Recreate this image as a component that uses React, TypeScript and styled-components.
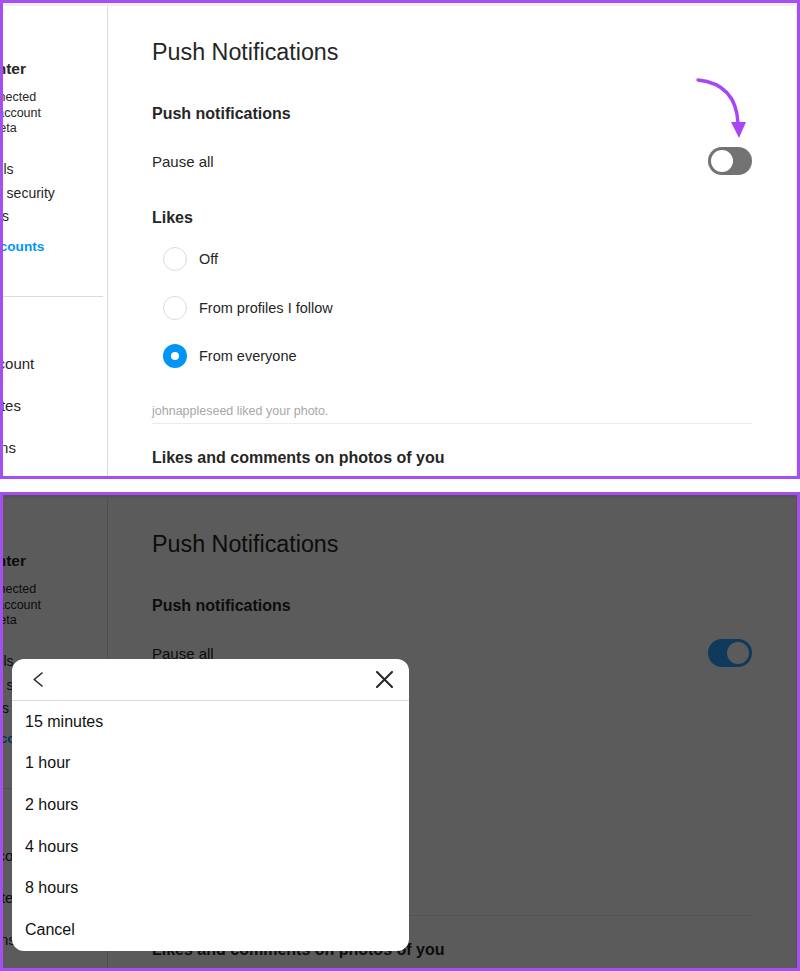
import styled, { createGlobalStyle } from 'styled-components';

const GlobalStyle = createGlobalStyle`
  body {
    margin: 0;
    background: #ffffff;
    font-family: 'Liberation Sans', Arial, sans-serif;
    color: #262626;
  }
`;

const Page = styled.div`
  display: flex;
  flex-direction: column;
  gap: 13px;
  width: 800px;
`;

const Frame = styled.div`
  position: relative;
  box-sizing: border-box;
  height: 479px;
  border: 3px solid #a64ff0;
  background: #ffffff;
  overflow: hidden;
  display: flex;
  flex-direction: column;
`;

const TopStrip = styled.div`
  height: 3px;
  background: #efefef;
  flex-shrink: 0;
`;

const Body = styled.div`
  display: flex;
  flex: 1;
  min-height: 0;
`;

/* sidebar is scrolled sideways, so only the right end of each line shows */
const Sidebar = styled.nav`
  box-sizing: border-box;
  width: 105px;
  flex-shrink: 0;
  border-right: 1px solid #dbdbdb;
  overflow: hidden;
`;

const SidebarInner = styled.div`
  width: 212px;
  margin-left: -108px;
  padding-top: 53px;
`;

const AccountsCard = styled.div`
  padding: 0 32px 0 7px;
`;

const CardTitle = styled.div`
  font-size: 15.5px;
  font-weight: 700;
  line-height: 20px;
`;

const CardText = styled.p`
  margin: 11px 0 0;
  font-size: 12.5px;
  line-height: 15.5px;
`;

const CardLinks = styled.ul`
  list-style: none;
  margin: 6px 0 0;
  padding: 0;
`;

const CardLink = styled.li`
  padding-left: 12px;
  font-size: 14px;
  line-height: 23.5px;
  white-space: nowrap;
`;

const SeeMore = styled.a`
  display: block;
  margin-top: 6px;
  color: #0095f6;
  font-size: 13.6px;
  font-weight: 700;
  line-height: 23px;
  text-decoration: none;
`;

const SidebarDivider = styled.hr`
  border: none;
  height: 1px;
  background: #dbdbdb;
  margin: 15px 4px 3px 0;
`;

const MenuItem = styled.a`
  display: flex;
  align-items: center;
  height: 42.4px;
  font-size: 15px;
  color: #262626;
  white-space: nowrap;
  text-decoration: none;
`;

const Main = styled.main`
  flex: 1;
  padding: 24px 44px 0 44px;
  border-right: 1px solid #ececec;
`;

const Title = styled.h1`
  margin: 0;
  font-size: 23.3px;
  font-weight: 400;
  line-height: 44px;
`;

const SectionTitle = styled.h2<{ $gap: number }>`
  margin: ${(p) => p.$gap}px 0 0;
  font-size: 16px;
  font-weight: 700;
  line-height: 32px;
`;

const SettingRow = styled.div`
  display: flex;
  align-items: center;
  justify-content: space-between;
  height: 48px;
  margin-top: 7px;
  font-size: 15px;
`;

const Toggle = styled.button<{ $on: boolean }>`
  box-sizing: border-box;
  width: 44px;
  height: 28px;
  padding: 3px;
  border: none;
  border-radius: 14px;
  background: ${(p) => (p.$on ? '#2aa4ff' : '#737373')};
  display: flex;
  justify-content: ${(p) => (p.$on ? 'flex-end' : 'flex-start')};
  align-items: center;
  cursor: pointer;
`;

const Knob = styled.span`
  width: 22px;
  height: 22px;
  border-radius: 50%;
  background: #ffffff;
`;

const RadioGroup = styled.div`
  margin-top: 1px;
`;

const RadioRow = styled.label`
  display: flex;
  align-items: center;
  gap: 12px;
  height: 48.5px;
  padding-left: 11px;
  font-size: 14.5px;
`;

const RadioCircle = styled.span<{ $checked: boolean }>`
  box-sizing: border-box;
  width: 24px;
  height: 24px;
  border-radius: 50%;
  border: ${(p) => (p.$checked ? 'none' : '1px solid #dbdbdb')};
  background: ${(p) => (p.$checked ? '#0095f6' : '#ffffff')};
  display: flex;
  align-items: center;
  justify-content: center;

  &::after {
    content: '';
    display: ${(p) => (p.$checked ? 'block' : 'none')};
    width: 8px;
    height: 8px;
    border-radius: 50%;
    background: #ffffff;
  }
`;

const Caption = styled.div`
  margin-top: 22.5px;
  padding-bottom: 4px;
  border-bottom: 1px solid #ebebeb;
  font-size: 12.5px;
  line-height: 16px;
  color: #a8a8a8;
`;

const Pointer = styled.svg`
  position: absolute;
  left: 692px;
  top: 74px;
`;

const Dimmer = styled.div`
  position: absolute;
  inset: 0;
  background: rgba(0, 0, 0, 0.643);
`;

const Sheet = styled.div`
  position: absolute;
  left: 9px;
  top: 164px;
  width: 397px;
  background: #ffffff;
  border-radius: 12px;
  overflow: hidden;
`;

const SheetHeader = styled.div`
  box-sizing: border-box;
  height: 42px;
  padding: 0 16px 0 21px;
  border-bottom: 1px solid #dbdbdb;
  display: flex;
  align-items: center;
  justify-content: space-between;
`;

const IconButton = styled.button`
  border: none;
  background: none;
  padding: 0;
  display: flex;
  cursor: pointer;
`;

const SheetOption = styled.button`
  display: flex;
  align-items: center;
  width: 100%;
  height: 41.6px;
  padding: 0 0 0 13px;
  border: none;
  background: none;
  font-family: inherit;
  font-size: 16px;
  color: #111111;
  text-align: left;
  cursor: pointer;
`;

const likeOptions = [
  { label: 'Off', checked: false },
  { label: 'From profiles I follow', checked: false },
  { label: 'From everyone', checked: true },
];

const menu = ['Edit profile', 'Professional account', 'Apps and websites', 'Email notifications', 'Push notifications'];

const pauseOptions = ['15 minutes', '1 hour', '2 hours', '4 hours', '8 hours', 'Cancel'];

const SettingsView = ({ paused }: { paused: boolean }) => (
  <>
    <TopStrip />
    <Body>
      <Sidebar>
        <SidebarInner>
          <AccountsCard>
            <CardTitle>Accounts Center</CardTitle>
            <CardText>
              Manage your connected experiences and account settings across Meta technologies.
            </CardText>
            <CardLinks>
              <CardLink>Personal details</CardLink>
              <CardLink>Password and security</CardLink>
              <CardLink>Ad preferences</CardLink>
            </CardLinks>
            <SeeMore href="#">See more in Accounts Center</SeeMore>
          </AccountsCard>
          <SidebarDivider />
          {menu.map((item) => (
            <MenuItem key={item} href="#">
              {item}
            </MenuItem>
          ))}
        </SidebarInner>
      </Sidebar>
      <Main>
        <Title>Push Notifications</Title>
        <SectionTitle $gap={24}>Push notifications</SectionTitle>
        <SettingRow>
          Pause all
          <Toggle $on={paused}>
            <Knob />
          </Toggle>
        </SettingRow>
        <SectionTitle $gap={17}>Likes</SectionTitle>
        <RadioGroup>
          {likeOptions.map((o) => (
            <RadioRow key={o.label}>
              <RadioCircle $checked={o.checked} />
              {o.label}
            </RadioRow>
          ))}
        </RadioGroup>
        <Caption>johnappleseed liked your photo.</Caption>
        <SectionTitle $gap={18}>Likes and comments on photos of you</SectionTitle>
      </Main>
    </Body>
  </>
);

const App = () => (
  <>
    <GlobalStyle />
    <Page>
      <Frame>
        <SettingsView paused={false} />
        <Pointer width="60" height="66" viewBox="0 0 60 66">
          <path d="M3 3 Q41 7 43 46" fill="none" stroke="#a845f5" strokeWidth="3.4" strokeLinecap="round" />
          <polygon points="36,45 51,45 44,61" fill="#a845f5" />
        </Pointer>
      </Frame>
      <Frame>
        <SettingsView paused />
        <Dimmer />
        <Sheet>
          <SheetHeader>
            <IconButton aria-label="Back">
              <svg width="10" height="15" viewBox="0 0 10 15">
                <polyline points="9,1 1.2,7.5 9,14" fill="none" stroke="#262626" strokeWidth="1.6" strokeLinecap="round" strokeLinejoin="round" />
              </svg>
            </IconButton>
            <IconButton aria-label="Close">
              <svg width="17" height="17" viewBox="0 0 17 17">
                <path d="M1 1 L16 16 M16 1 L1 16" stroke="#262626" strokeWidth="2" strokeLinecap="round" />
              </svg>
            </IconButton>
          </SheetHeader>
          {pauseOptions.map((label) => (
            <SheetOption key={label}>{label}</SheetOption>
          ))}
        </Sheet>
      </Frame>
    </Page>
  </>
);

export default App;
